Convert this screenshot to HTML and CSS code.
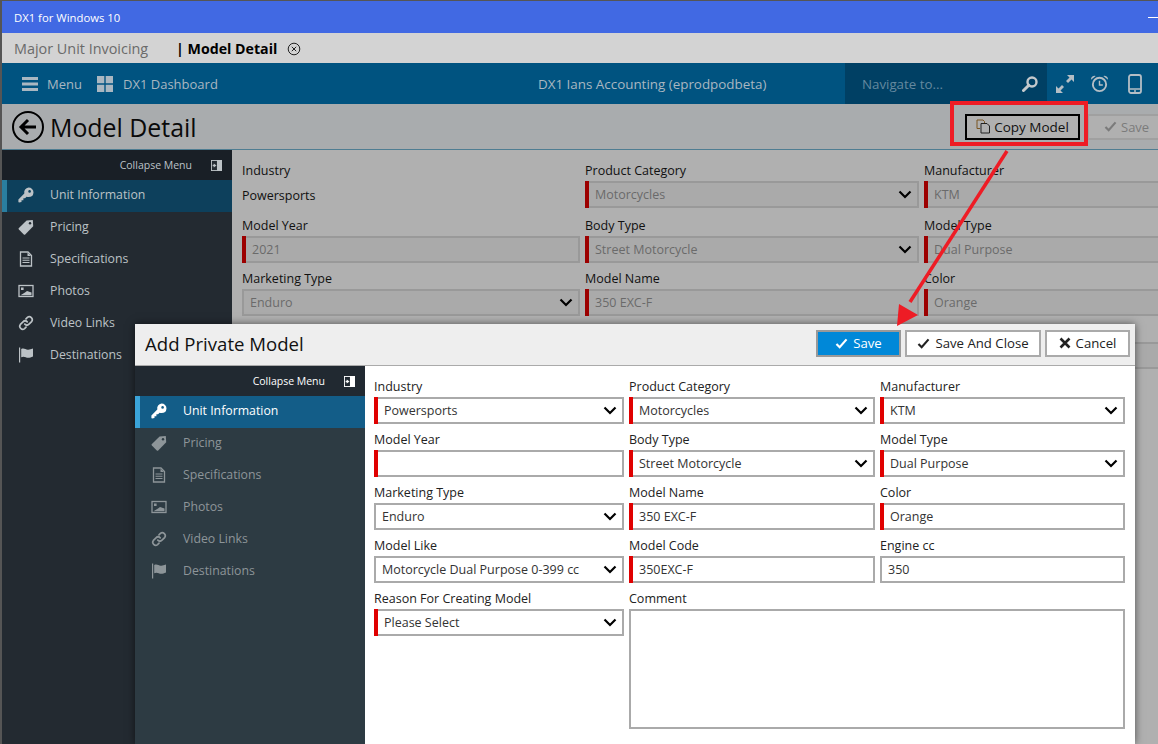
FILE: index.html
```html
<!DOCTYPE html>
<html lang="en">
<head>
<meta charset="utf-8">
<title>DX1 for Windows 10</title>
<link rel="stylesheet" href="styles.css">
</head>
<body>
<svg class="sprite" xmlns="http://www.w3.org/2000/svg">
  <symbol id="i-key" viewBox="0 0 16 16"><path d="M10.500 0.500a5 5 0 0 1 5 5 5 5 0 0 1-5 4.600c-.7 0-1.300-.1-1.900-.4L7 11.300H5.400v1.900H3.500v1.900L1 15.600.4 15v-2.600l5.900-5.900A5 5 0 0 1 10.500.5z" fill="currentColor"/><circle cx="11.600" cy="4.400" r="1.300" fill="var(--hole)"/></symbol>
  <symbol id="i-tag" viewBox="0 0 16 16"><path d="M8.600 1.600 14.800 1l.4 6.300-8 8.100a1 1 0 0 1-1.400 0L.9 10.500a1 1 0 0 1 0-1.400z" fill="currentColor"/><circle cx="12" cy="4.200" r="1.200" fill="var(--hole)"/></symbol>
  <symbol id="i-doc" viewBox="0 0 16 16"><path d="M2.500 1h7.500l3.500 3.500V15h-11z" fill="none" stroke="currentColor" stroke-width="1.300"/><path d="M9.500 1.500v3.500h3.500z M4.500 6.500h7v1h-7z M4.500 8.800h7v1h-7z M4.500 11.100h7v1h-7z" fill="currentColor"/></symbol>
  <symbol id="i-pic" viewBox="0 0 16 16"><rect x="1" y="2.500" width="14" height="11" fill="none" stroke="currentColor" stroke-width="1.300"/><path d="M2.500 12.300 7 9.500l2-1.500 4.500 1.500v2.800z M3 4.500h2.600v2.400H3z" fill="currentColor"/></symbol>
  <symbol id="i-link" viewBox="0 0 16 16"><g fill="none" stroke="currentColor" stroke-width="1.700" stroke-linecap="round"><path d="M6.800 9.200a3 3 0 0 0 4.200 0l2.600-2.600a3 3 0 0 0-4.200-4.200L8 3.800"/><path d="M9.200 6.800a3 3 0 0 0-4.200 0L2.400 9.400a3 3 0 0 0 4.200 4.200L8 12.200"/></g></symbol>
  <symbol id="i-flag" viewBox="0 0 16 16"><path d="M1 0.500h1.200v15H1z" fill="currentColor"/><path d="M3.200 2c3-1.500 4.500 1 7 .7 1.500-.1 3-.5 4.800-1.200v8c-1.800 1-3.300 1.300-4.800 1.300-2.500 0-4-2-7-.5z" fill="currentColor"/></symbol>
  <symbol id="i-collapse" viewBox="0 0 12 12"><rect width="12" height="12" fill="currentColor"/><path d="M1 1h5.500v10H1z" fill="var(--hole)"/><path d="M6 6 3 3.800v1.500H1.800v1.400H3v1.500z" fill="currentColor"/></symbol>
  <symbol id="i-chev" viewBox="0 0 14 9"><path d="M1.500 1.500 7 7l5.500-5.500" fill="none" stroke="currentColor" stroke-width="2.200"/></symbol>
  <symbol id="i-check" viewBox="0 0 14 12"><path d="M1.500 6.500 5 10 12.500 1.500" fill="none" stroke="currentColor" stroke-width="2.400"/></symbol>
</svg>

<div class="app">
  <div class="titlebar"><span>DX1 for Windows 10</span><span class="minimize"></span></div>

  <div class="tabs">
    <span class="tab">Major Unit Invoicing</span>
    <span class="tab-active">| Model Detail</span>
    <svg class="tab-close" viewBox="0 0 14 14"><circle cx="7" cy="7" r="5.800" fill="none" stroke="#222" stroke-width="1"/><path d="M4.800 4.800l4.400 4.400M9.200 4.800l-4.400 4.400" stroke="#222" stroke-width="1"/></svg>
  </div>

  <nav class="nav">
    <svg class="nav-ico-menu" viewBox="0 0 16 14"><path d="M0 0h16v3H0zM0 5.500h16v3H0zM0 11h16v3H0z" fill="currentColor"/></svg>
    <span class="nav-menu">Menu</span>
    <svg class="nav-ico-grid" viewBox="0 0 16 16"><path d="M0 0h7.300v7.300H0zM8.700 0H16v7.300H8.700zM0 8.700h7.300V16H0zM8.700 8.700H16V16H8.700z" fill="currentColor"/></svg>
    <span class="nav-dash">DX1 Dashboard</span>
    <span class="nav-center">DX1 Ians Accounting (eprodpodbeta)</span>
    <div class="nav-search">
      <span>Navigate to...</span>
      <svg class="nav-ico" viewBox="0 0 16 16"><circle cx="10" cy="6" r="4.500" fill="none" stroke="currentColor" stroke-width="2.400"/><path d="M6.800 9.200 1.500 14.500" stroke="currentColor" stroke-width="3" stroke-linecap="round"/></svg>
    </div>
    <svg class="nav-act nav-expand" viewBox="0 0 20 20"><path d="M12 1h7v7l-2.500-2.500-3.500 3.500-2-2 3.500-3.500zM8 19H1v-7l2.500 2.500L7 11l2 2-3.500 3.500z" fill="currentColor"/></svg>
    <svg class="nav-act nav-clock" viewBox="0 0 20 20"><circle cx="10" cy="11" r="7" fill="none" stroke="currentColor" stroke-width="2"/><path d="M10 7v4.500h3.500" fill="none" stroke="currentColor" stroke-width="1.500"/><path d="M1 6a4 4 0 0 1 5-4zM19 6a4 4 0 0 0-5-4z" fill="currentColor"/></svg>
    <svg class="nav-act nav-phone" viewBox="0 0 14 20"><rect x="1" y="1" width="12" height="18" rx="2" fill="none" stroke="currentColor" stroke-width="1.800"/><path d="M1 15h12" stroke="currentColor" stroke-width="1.500"/><circle cx="7" cy="17" r="1" fill="currentColor"/></svg>
  </nav>

  <header class="page-head">
    <svg class="back" viewBox="0 0 32 32"><circle cx="16" cy="16" r="15" fill="none" stroke="#000" stroke-width="2"/><path d="M16 9l-7 7 7 7M9.500 16H24" fill="none" stroke="#000" stroke-width="3"/></svg>
    <h1 class="page-title">Model Detail</h1>
    <button class="btn-copy">
      <svg class="copy-ico" viewBox="0 0 15 15"><path d="M1 1h6l1.500 1.500V4M1 1v8.500h3" fill="none" stroke="#7a5520" stroke-width="1"/><path d="M5 4.500h6l2.500 2.500v7H5z" fill="none" stroke="#222" stroke-width="1"/></svg>
      Copy Model
    </button>
    <button class="btn-save-dim"><svg class="ico-check" viewBox="0 0 14 12"><use href="#i-check"/></svg>Save</button>
  </header>

  <div class="workspace">
    <aside class="side side-back">
      <div class="collapse"><span>Collapse Menu</span><svg class="collapse-ico"><use href="#i-collapse"/></svg></div>
      <div class="side-item active"><svg class="side-ico"><use href="#i-key"/></svg>Unit Information</div>
      <div class="side-item"><svg class="side-ico"><use href="#i-tag"/></svg>Pricing</div>
      <div class="side-item"><svg class="side-ico"><use href="#i-doc"/></svg>Specifications</div>
      <div class="side-item"><svg class="side-ico"><use href="#i-pic"/></svg>Photos</div>
      <div class="side-item"><svg class="side-ico"><use href="#i-link"/></svg>Video Links</div>
      <div class="side-item"><svg class="side-ico"><use href="#i-flag"/></svg>Destinations</div>
    </aside>
    <main class="back-form">
      <div class="bf"><label>Industry</label><div class="bf-static">Powersports</div></div>
      <div class="bf"><label>Product Category</label><div class="bf-ctl req">Motorcycles<svg class="chev"><use href="#i-chev"/></svg></div></div>
      <div class="bf"><label>Manufacturer</label><div class="bf-ctl req">KTM</div></div>
      <div class="bf"><label>Model Year</label><div class="bf-ctl req">2021</div></div>
      <div class="bf"><label>Body Type</label><div class="bf-ctl req">Street Motorcycle<svg class="chev"><use href="#i-chev"/></svg></div></div>
      <div class="bf"><label>Model Type</label><div class="bf-ctl req">Dual Purpose</div></div>
      <div class="bf"><label>Marketing Type</label><div class="bf-ctl">Enduro<svg class="chev"><use href="#i-chev"/></svg></div></div>
      <div class="bf"><label>Model Name</label><div class="bf-ctl req">350 EXC-F</div></div>
      <div class="bf"><label>Color</label><div class="bf-ctl req">Orange</div></div>
      <div class="bf"><div class="bf-spacer"></div><div class="bf-ctl"></div></div>
      <div class="bf"><div class="bf-spacer"></div><div class="bf-ctl"></div></div>
      <div class="bf"><div class="bf-spacer"></div><div class="bf-ctl"></div></div>
    </main>
  </div>
</div>

<section class="modal">
  <div class="modal-head">
    <h2 class="modal-title">Add Private Model</h2>
    <button class="mbtn mbtn-primary"><svg class="ico-check" viewBox="0 0 14 12"><use href="#i-check"/></svg>Save</button>
    <button class="mbtn mbtn-close"><svg class="ico-check" viewBox="0 0 14 12"><use href="#i-check"/></svg>Save And Close</button>
    <button class="mbtn mbtn-cancel"><svg class="ico-x" viewBox="0 0 12 12"><path d="M1.500 1.500l9 9M10.500 1.500l-9 9" stroke="currentColor" stroke-width="2.600"/></svg>Cancel</button>
  </div>
  <div class="modal-body">
    <aside class="side side-front">
      <div class="collapse"><span>Collapse Menu</span><svg class="collapse-ico"><use href="#i-collapse"/></svg></div>
      <div class="side-item active"><svg class="side-ico"><use href="#i-key"/></svg>Unit Information</div>
      <div class="side-item"><svg class="side-ico"><use href="#i-tag"/></svg>Pricing</div>
      <div class="side-item"><svg class="side-ico"><use href="#i-doc"/></svg>Specifications</div>
      <div class="side-item"><svg class="side-ico"><use href="#i-pic"/></svg>Photos</div>
      <div class="side-item"><svg class="side-ico"><use href="#i-link"/></svg>Video Links</div>
      <div class="side-item"><svg class="side-ico"><use href="#i-flag"/></svg>Destinations</div>
    </aside>
    <form class="mform">
      <div class="mf"><label>Industry</label><div class="ctl req">Powersports<svg class="chev"><use href="#i-chev"/></svg></div></div>
      <div class="mf"><label>Product Category</label><div class="ctl req">Motorcycles<svg class="chev"><use href="#i-chev"/></svg></div></div>
      <div class="mf"><label>Manufacturer</label><div class="ctl req">KTM<svg class="chev"><use href="#i-chev"/></svg></div></div>
      <div class="mf"><label>Model Year</label><div class="ctl req"></div></div>
      <div class="mf"><label>Body Type</label><div class="ctl req">Street Motorcycle<svg class="chev"><use href="#i-chev"/></svg></div></div>
      <div class="mf"><label>Model Type</label><div class="ctl req">Dual Purpose<svg class="chev"><use href="#i-chev"/></svg></div></div>
      <div class="mf"><label>Marketing Type</label><div class="ctl">Enduro<svg class="chev"><use href="#i-chev"/></svg></div></div>
      <div class="mf"><label>Model Name</label><div class="ctl req">350 EXC-F</div></div>
      <div class="mf"><label>Color</label><div class="ctl req">Orange</div></div>
      <div class="mf"><label>Model Like</label><div class="ctl">Motorcycle Dual Purpose 0-399 cc<svg class="chev"><use href="#i-chev"/></svg></div></div>
      <div class="mf"><label>Model Code</label><div class="ctl req">350EXC-F</div></div>
      <div class="mf"><label>Engine cc</label><div class="ctl">350</div></div>
      <div class="mf"><label>Reason For Creating Model</label><div class="ctl req">Please Select<svg class="chev"><use href="#i-chev"/></svg></div></div>
      <div class="mf mf-wide"><label>Comment</label><div class="ctl ctl-area"></div></div>
    </form>
  </div>
</section>

<div class="callout"></div>
<svg class="arrow" viewBox="0 0 1158 744"><path d="M1007 151 910 302" stroke="#ee1c25" stroke-width="3.500" fill="none"/><path d="M897 326 899 304 918 315z" fill="#ee1c25"/></svg>
</body>
</html>
```
FILE: styles.css
```css
* { box-sizing: border-box; }
html, body { margin: 0; padding: 0; }
body {
  width: 1158px;
  height: 744px;
  overflow: hidden;
  position: relative;
  background: #222;
  font-family: "Open Sans", "Noto Sans", "Liberation Sans", sans-serif;
  font-size: 12.5px;
  color: #111;
}
.sprite { display: none; }
label { display: block; }
button { font: inherit; cursor: default; }
h1, h2 { margin: 0; font-weight: 400; }

.app {
  height: 744px;
  display: flex;
  flex-direction: column;
  border-top: 1px solid #555;
  border-left: 2px solid #555;
}

.titlebar {
  flex: 0 0 32px;
  display: flex;
  align-items: center;
  justify-content: space-between;
  padding: 0 0 0 12px;
  background: #4169e3;
  color: #fff;
  font-size: 11.3px;
}
.minimize { width: 10px; height: 1px; background: #fff; }

.tabs {
  flex: 0 0 30px;
  display: flex;
  align-items: center;
  padding-left: 12px;
  background: #d3d3d3;
}
.tab { width: 162px; font-size: 14.4px; color: #6a6a6a; }
.tab-active { font-size: 14.2px; font-weight: 700; color: #000; }
.tab-close { width: 14px; height: 14px; margin-left: 10px; margin-top: 2px; }

.nav {
  flex: 0 0 41px;
  display: flex;
  align-items: center;
  background: #005380;
  color: #a9b7c1;
  font-size: 13px;
}
.nav-ico-menu { width: 16px; height: 14px; margin-left: 20px; }
.nav-menu { margin-left: 9px; width: 50px; }
.nav-ico-grid { width: 16px; height: 16px; }
.nav-dash { margin-left: 10px; width: 415px; }
.nav-center { width: 229px; font-size: 13.4px; white-space: nowrap; }
.nav-search {
  align-self: stretch;
  width: 202px;
  margin-left: 78px;
  padding: 0 9px 0 17px;
  display: flex;
  align-items: center;
  justify-content: space-between;
  background: #004064;
  color: #64899f;
  font-size: 13.3px;
}
.nav-ico { width: 16px; height: 16px; color: #c4c9cc; }
.nav-act { color: #b4bec5; }
.nav-expand { width: 20px; height: 20px; margin-left: 8px; }
.nav-clock { width: 19px; height: 19px; margin-left: 15px; }
.nav-phone { width: 14px; height: 20px; margin-left: 19px; }

.page-head {
  flex: 0 0 46px;
  display: flex;
  align-items: center;
  overflow: hidden;
  background: #a9acae;
  border-bottom: 1px solid #4f7d92;
}
.back { width: 32px; height: 32px; margin-left: 10px; flex: none; }
.page-title { flex: none; width: 915px; margin-left: 6px; font-size: 24.9px; color: #0a0a0a; white-space: nowrap; }
.btn-copy {
  flex: none;
  width: 115px;
  height: 26px;
  padding: 0;
  display: flex;
  align-items: center;
  justify-content: center;
  gap: 3px;
  border: 2px solid #000;
  background: #b0b0b0;
  color: #111;
  font-size: 13.5px;
  white-space: nowrap;
}
.copy-ico { width: 15px; height: 15px; }
.btn-save-dim {
  flex: none;
  width: 90px;
  height: 26px;
  margin-left: 7px;
  padding: 0 0 0 15px;
  display: flex;
  align-items: center;
  gap: 4px;
  border: 2px solid #a0a0a0;
  background: #b0b0b0;
  color: #7b7b7b;
  font-size: 13px;
}
.ico-check { width: 13px; height: 11px; }
.ico-x { width: 12px; height: 12px; }

.workspace {
  flex: 1;
  display: flex;
  min-height: 0;
  overflow: hidden;
  background: #b0b0b0;
}

/* Side menus */
.side { width: 230px; flex: none; }
.collapse {
  height: 30px;
  display: flex;
  align-items: center;
  justify-content: flex-end;
  gap: 19px;
  padding-right: 10px;
  font-size: 10.5px;
}
.collapse-ico { width: 11px; height: 11px; }
.side-item {
  height: 32px;
  display: flex;
  align-items: center;
  padding: 0 0 3px 16px;
  font-size: 12.3px;
  white-space: nowrap;
}
.side-item.active { padding-left: 11px; border-left: 5px solid; }
.side-ico { width: 16px; height: 16px; margin-right: 16px; flex: none; }

.side-back { --hole: #232a31; background: #232a31; color: #bcc2c6; }
.side-back .collapse { background: #191f26; color: #bcc2c6; }
.side-back .side-item.active { background: #0d405c; border-color: #2a7ea0; --hole: #0d405c; }
.side-front { --hole: #2d3b43; background: #2d3b43; color: #8d9599; }
.side-front .collapse { background: #212931; color: #fff; --hole: #212931; }
.side-front .side-item.active { background: #135d88; border-color: #3aa3d8; color: #fff; --hole: #135d88; }

/* Dimmed form behind the dialog */
.back-form {
  flex: 1;
  min-width: 0;
  padding: 12px 0 0 10px;
  display: grid;
  grid-template-columns: 338px 334px 300px;
  grid-template-rows: 48px 46px 46px 46px;
  gap: 7px 5px;
  overflow: hidden;
}
.bf label { height: 19px; line-height: 18px; white-space: nowrap; }
.bf-spacer { height: 19px; }
.bf-static { height: 27px; line-height: 30px; }
.bf-ctl {
  position: relative;
  height: 27px;
  padding-left: 6px;
  display: flex;
  align-items: center;
  border: 2px solid #999;
  background: #aaa;
  color: #6a6a6a;
}
.bf-ctl.req { padding-left: 8px; }
.bf-ctl.req::before {
  content: "";
  position: absolute;
  left: -2px; top: -2px; bottom: -2px;
  width: 4px;
  background: #9c0000;
}

.chev { position: absolute; right: 5px; top: 7px; width: 14px; height: 9px; color: #000; }

/* Dialog */
.modal {
  position: absolute;
  left: 135px;
  top: 324px;
  width: 1000px;
  height: 420px;
  display: flex;
  flex-direction: column;
  background: #fff;
  box-shadow: 0 0 8px rgba(0, 0, 0, .55);
}
.modal-head {
  flex: 0 0 42px;
  display: flex;
  align-items: center;
  gap: 4px;
  padding: 0 5px 2px 10px;
  background: #eee;
  border-bottom: 1px solid #aaa;
}
.modal-title { flex: 1; font-size: 18.6px; color: #111; white-space: nowrap; }
.mbtn {
  height: 27px;
  padding: 0 0 1px;
  display: flex;
  align-items: center;
  justify-content: center;
  gap: 5px;
  border: 2px solid #aaa;
  background: #fff;
  color: #222;
  font-size: 13.2px;
  white-space: nowrap;
}
.mbtn-primary { width: 85px; background: #0088d8; border-color: #999; color: #fff; }
.mbtn-close { width: 136px; }
.mbtn-cancel { width: 85px; }

.modal-body { flex: 1; min-height: 0; display: flex; }
.mform {
  flex: 1;
  padding: 12px 10px 0 9px;
  display: grid;
  grid-template-columns: 250px 246px 245px;
  grid-auto-rows: min-content;
  gap: 7px 5px;
  color: #222;
}
.mf label { height: 19px; line-height: 17px; white-space: nowrap; }
.ctl {
  position: relative;
  height: 27px;
  padding-left: 6px;
  display: flex;
  align-items: center;
  border: 2px solid #aaa;
  background: #fff;
  color: #333;
  white-space: nowrap;
}
.ctl.req { padding-left: 8px; }
.ctl.req::before {
  content: "";
  position: absolute;
  left: -2px; top: -2px; bottom: -2px;
  width: 4px;
  background: #e00000;
}
.mf-wide { grid-column: span 2; }
.ctl-area { height: 120px; }

/* Annotation */
.callout {
  position: absolute;
  left: 950px;
  top: 101px;
  width: 138px;
  height: 45px;
  border: 4px solid #ee1c25;
}
.arrow {
  position: absolute;
  left: 0;
  top: 0;
  width: 1158px;
  height: 744px;
  pointer-events: none;
}
```
